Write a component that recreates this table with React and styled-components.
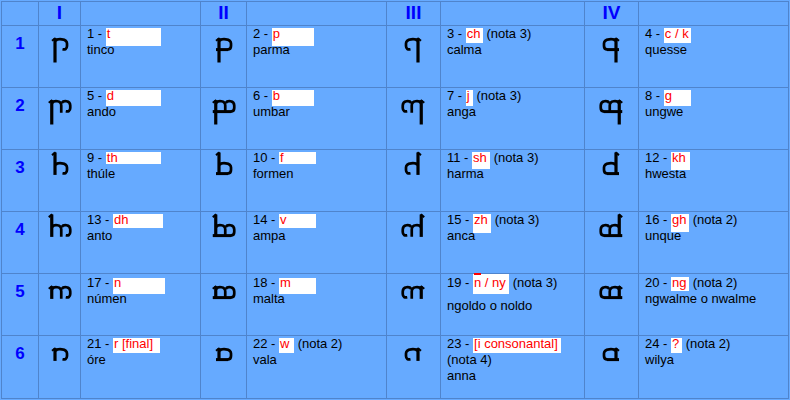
import React from 'react';
import styled, { createGlobalStyle } from 'styled-components';

const LINE = '#4f84cc';
const BG = '#66aaff';

const Global = createGlobalStyle`
  html, body { margin: 0; background: ${BG}; }
  body { font-family: "Liberation Sans", Arial, sans-serif; }
`;

const Table = styled.div`
  display: grid;
  grid-template-columns: 36px 41px 119px 45px 139px 53px 143px 53px 149px;
  grid-template-rows: 23px repeat(5, 61px) 62px;
  gap: 1px;
  width: max-content;
  margin: 1px 0 0 1px;
  background: ${LINE};
  border: 1px solid ${LINE};
`;

const Cell = styled.div`
  background: ${BG};
  overflow: visible;
`;

const HeadCell = styled(Cell)`
  color: #0000ff;
  font: bold 19px/21px "Liberation Sans", Arial, sans-serif;
  text-align: center;
`;

const NumCell = styled(Cell)`
  color: #0000ff;
  font: bold 17px/20px "Liberation Sans", Arial, sans-serif;
  text-align: center;
  padding-top: 8px;
`;

const GlyphCell = styled(Cell)`
  & > svg { display: block; }
`;

const TextCell = styled(Cell)`
  padding: ${(p) => p.$pt || 0}px 0 0 6px;
  font-size: 13px;
  line-height: 16px;
  color: #000;
`;

const Line = styled.div`
  white-space: nowrap;
  margin-bottom: ${(p) => p.$gap || 0}px;
`;

const Hl = styled.span`
  position: relative;
  z-index: 0;
  display: inline-block;
  box-sizing: border-box;
  min-width: ${(p) => (p.$w ? `${p.$w}px` : '0')};
  padding: 0 2px 0 1px;
  color: #ff0000;
  &::before {
    content: '';
    position: absolute;
    z-index: -1;
    left: 0;
    right: 0;
    top: ${(p) => p.$t}px;
    height: ${(p) => p.$h}px;
    background: #ffffff;
  }
`;

const Over = styled.span`
  position: relative;
  &::after {
    content: '';
    position: absolute;
    left: 0;
    right: 0;
    top: -2px;
    height: 2px;
    background: #ff0000;
  }
`;

function Glyph({ stem, left, closed, bowls, cw }) {
  const W = bowls === 2 ? 24.5 : 18;
  const x0 = 4.5;
  const t = 13;
  const b = 23.6;
  const x1 = W - 1.5;
  const sTop = stem === 'u' ? 2.5 : t - 0.8;
  const sBot = stem === 'd' ? 36.5 : b + 1.3;

  const bump = (xa, xb, last) => {
    let d = `M ${xa + 0.5} ${t + 2} C ${xa + 2} ${t - 0.6} ${xb} ${t - 0.8} ${xb} ${t + 4.5} L ${xb} ${b - 3.5}`;
    if (!last) d += ` L ${xb} ${b + 1.2}`;
    else if (closed) d += ` C ${xb} ${b - 0.5} ${xb - 1.5} ${b} ${xb - 3.5} ${b}`;
    else d += ` C ${xb} ${b - 0.5} ${xb - 2} ${b + 0.2} ${xb - 4.5} ${b - 0.3}`;
    return d;
  };

  const bowlsPaths =
    bowls === 2
      ? [bump(x0, x0 + 9.5, false), bump(x0 + 9.5, x1, true)]
      : [bump(x0, x1, true)];

  const inner = (
    <g fill="none" stroke="#000">
      <path d={`M ${x0} ${sTop} L ${x0} ${sBot}`} strokeWidth="3.2" />
      <path d={`M ${x0 - 3} ${sTop + 2.6} L ${x0 + 0.6} ${sTop - 0.2}`} strokeWidth="2" />
      {bowlsPaths.map((d, i) => (
        <path key={i} d={d} strokeWidth="2.7" />
      ))}
      {closed && <path d={`M ${x0 - 3} ${b} L ${x1 - 3} ${b}`} strokeWidth="3" />}
    </g>
  );

  return (
    <svg width={cw} height={61} viewBox={`0 0 ${cw} 61`}>
      <g transform={`translate(${(cw - W) / 2},0)`}>
        {left ? <g transform={`translate(${W},0) scale(-1,1)`}>{inner}</g> : inner}
      </g>
    </svg>
  );
}

const GLYPH_W = [41, 45, 53, 53];
const STEMS = ['d', 'd', 'u', 'u', 's', 's'];
const BOWLS = [1, 2, 1, 2, 2, 1];

const rows = [
  {
    pt: 0,
    cells: [
      { num: '1', hl: 't', w: 55, t: 2, h: 18, lines: ['tinco'] },
      { num: '2', hl: 'p', w: 42, t: 2, h: 18, lines: ['parma'] },
      { num: '3', hl: 'ch', w: 17, t: 2, h: 15, note: '(nota 3)', lines: ['calma'] },
      { num: '4', hl: 'c / k', w: 27, t: 2, h: 15, lines: ['quesse'] },
    ],
  },
  {
    pt: 0,
    cells: [
      { num: '5', hl: 'd', w: 55, t: 2, h: 16, lines: ['ando'] },
      { num: '6', hl: 'b', w: 42, t: 2, h: 16, lines: ['umbar'] },
      { num: '7', hl: 'j', w: 7, t: 2, h: 16, note: '(nota 3)', lines: ['anga'] },
      { num: '8', hl: 'g', w: 27, t: 2, h: 16, lines: ['ungwe'] },
    ],
  },
  {
    pt: 0,
    cells: [
      { num: '9', hl: 'th', w: 55, t: 2, h: 12, lines: ['thúle'] },
      { num: '10', hl: 'f', w: 37, t: 2, h: 12, lines: ['formen'] },
      { num: '11', hl: 'sh', w: 18, t: 2, h: 17, note: '(nota 3)', lines: ['harma'] },
      { num: '12', hl: 'kh', w: 19, t: 2, h: 18, lines: ['hwesta'] },
    ],
  },
  {
    pt: 0,
    cells: [
      { num: '13', hl: 'dh', w: 50, t: 2, h: 14, lines: ['anto'] },
      { num: '14', hl: 'v', w: 37, t: 2, h: 14, lines: ['ampa'] },
      { num: '15', hl: 'zh', w: 18, t: 2, h: 19, note: '(nota 3)', lines: ['anca'] },
      { num: '16', hl: 'gh', w: 18, t: 2, h: 18, note: '(nota 2)', lines: ['unque'] },
    ],
  },
  {
    pt: 1,
    cells: [
      { num: '17', hl: 'n', w: 52, t: 3, h: 16, lines: ['númen'] },
      { num: '18', hl: 'm', w: 37, t: 3, h: 16, lines: ['malta'] },
      {
        num: '19',
        hl: (
          <>
            <Over>n</Over> / ny
          </>
        ),
        w: 36,
        t: -1,
        h: 20,
        note: '(nota 3)',
        gap: 7,
        lines: ['ngoldo o noldo'],
      },
      { num: '20', hl: 'ng', w: 18, t: 2, h: 14, note: '(nota 2)', lines: ['ngwalme o nwalme'] },
    ],
  },
  {
    pt: 0,
    cells: [
      { num: '21', hl: 'r [final]', w: 47, t: 2, h: 15, lines: ['óre'] },
      { num: '22', hl: 'w', w: 15, t: 2, h: 15, note: '(nota 2)', lines: ['vala'] },
      { num: '23', hl: '[i consonantal]', w: 88, t: 2, h: 15, lines: ['(nota 4)', 'anna'] },
      { num: '24', hl: '?', w: 11, t: 2, h: 15, note: '(nota 2)', lines: ['wilya'] },
    ],
  },
];

const HEADS = ['I', 'II', 'III', 'IV'];

export default function App() {
  return (
    <>
      <Global />
      <Table>
        <HeadCell />
        {HEADS.map((h) => (
          <React.Fragment key={h}>
            <HeadCell>{h}</HeadCell>
            <HeadCell />
          </React.Fragment>
        ))}
        {rows.map((row, ri) => (
          <React.Fragment key={ri}>
            <NumCell>{ri + 1}</NumCell>
            {row.cells.map((c, ci) => (
              <React.Fragment key={ci}>
                <GlyphCell>
                  <Glyph
                    stem={STEMS[ri]}
                    bowls={BOWLS[ri]}
                    left={ci >= 2}
                    closed={ci % 2 === 1}
                    cw={GLYPH_W[ci]}
                  />
                </GlyphCell>
                <TextCell $pt={row.pt}>
                  <Line $gap={c.gap}>
                    {`${c.num} - `}
                    <Hl $w={c.w} $t={c.t} $h={c.h}>
                      {c.hl}
                    </Hl>
                    {c.note ? ` ${c.note}` : null}
                  </Line>
                  {c.lines.map((l, li) => (
                    <Line key={li}>{l}</Line>
                  ))}
                </TextCell>
              </React.Fragment>
            ))}
          </React.Fragment>
        ))}
      </Table>
    </>
  );
}
